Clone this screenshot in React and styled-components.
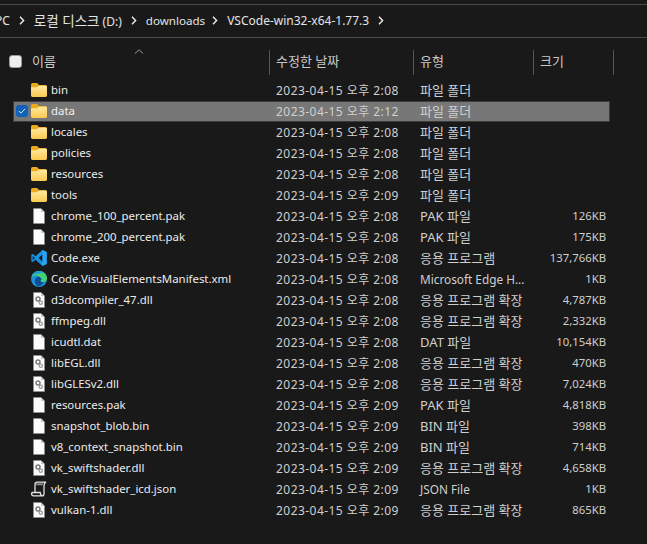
import React from "react";
import styled, { createGlobalStyle } from "styled-components";

const FILES = [
  ["folder", "bin", "2023-04-15 오후 2:08", "파일 폴더", ""],
  ["folder", "data", "2023-04-15 오후 2:12", "파일 폴더", ""],
  ["folder", "locales", "2023-04-15 오후 2:08", "파일 폴더", ""],
  ["folder", "policies", "2023-04-15 오후 2:08", "파일 폴더", ""],
  ["folder", "resources", "2023-04-15 오후 2:08", "파일 폴더", ""],
  ["folder", "tools", "2023-04-15 오후 2:09", "파일 폴더", ""],
  ["file", "chrome_100_percent.pak", "2023-04-15 오후 2:08", "PAK 파일", "126KB"],
  ["file", "chrome_200_percent.pak", "2023-04-15 오후 2:08", "PAK 파일", "175KB"],
  ["vscode", "Code.exe", "2023-04-15 오후 2:08", "응용 프로그램", "137,766KB"],
  ["edge", "Code.VisualElementsManifest.xml", "2023-04-15 오후 2:08", "Microsoft Edge H...", "1KB"],
  ["dll", "d3dcompiler_47.dll", "2023-04-15 오후 2:08", "응용 프로그램 확장", "4,787KB"],
  ["dll", "ffmpeg.dll", "2023-04-15 오후 2:08", "응용 프로그램 확장", "2,332KB"],
  ["file", "icudtl.dat", "2023-04-15 오후 2:08", "DAT 파일", "10,154KB"],
  ["dll", "libEGL.dll", "2023-04-15 오후 2:08", "응용 프로그램 확장", "470KB"],
  ["dll", "libGLESv2.dll", "2023-04-15 오후 2:08", "응용 프로그램 확장", "7,024KB"],
  ["file", "resources.pak", "2023-04-15 오후 2:09", "PAK 파일", "4,818KB"],
  ["file", "snapshot_blob.bin", "2023-04-15 오후 2:09", "BIN 파일", "398KB"],
  ["file", "v8_context_snapshot.bin", "2023-04-15 오후 2:09", "BIN 파일", "714KB"],
  ["dll", "vk_swiftshader.dll", "2023-04-15 오후 2:09", "응용 프로그램 확장", "4,658KB"],
  ["script", "vk_swiftshader_icd.json", "2023-04-15 오후 2:09", "JSON File", "1KB"],
  ["dll", "vulkan-1.dll", "2023-04-15 오후 2:09", "응용 프로그램 확장", "865KB"],
];

const Chevron = () => (
  <svg width="6" height="9" viewBox="0 0 6 9">
    <path d="M1 .8 4.6 4.500 1 8.200" fill="none" stroke="#eee" strokeWidth="1.4" />
  </svg>
);

const FolderIcon = () => (
  <svg width="16" height="14" viewBox="0 0 16 14">
    <defs>
      <linearGradient id="folderFront" x1="0" y1="0" x2="0" y2="1">
        <stop offset="0" stopColor="#ffe9a0" />
        <stop offset="1" stopColor="#fbc94f" />
      </linearGradient>
    </defs>
    <path d="M0 1.500A1.500 1.500 0 0 1 1.500 0H6l2 2h6.500A1.500 1.500 0 0 1 16 3.500V6H0z" fill="#eba91e" />
    <path d="M0 4.200h5.600L8 2.800h6.600A1.400 1.400 0 0 1 16 4.200v8.400a1.400 1.400 0 0 1-1.400 1.400H1.400A1.400 1.400 0 0 1 0 12.600z" fill="url(#folderFront)" />
  </svg>
);

const FileIcon = () => (
  <svg width="12" height="16" viewBox="0 0 12 16">
    <path d="M.5.5H8L11.500 4v11.500H.5z" fill="#fbfbfb" stroke="#8e8e8e" strokeWidth=".6" />
    <path d="M8 .5V4h3.500z" fill="#c8c8c8" />
  </svg>
);

const DllIcon = () => (
  <svg width="12" height="16" viewBox="0 0 12 16">
    <path d="M.5.5H8L11.500 4v11.500H.5z" fill="#fbfbfb" stroke="#8e8e8e" strokeWidth=".6" />
    <path d="M8 .5V4h3.500z" fill="#c8c8c8" />
    <circle cx="5" cy="7" r="2" fill="none" stroke="#7c7c7c" strokeWidth="1.500" />
    <circle cx="7.800" cy="10.800" r="1.600" fill="none" stroke="#9a9a9a" strokeWidth="1.300" />
  </svg>
);

const VsCodeIcon = () => (
  <svg width="16" height="16" viewBox="0 0 100 100">
    <path
      fillRule="evenodd"
      d="M71 0 98 13V87L71 100 29 61 11 75 2 70V30L11 25 29 39ZM72 27 48 50 72 73ZM11 37V63L24 50Z"
      fill="#1a90e0"
    />
    <path fillRule="evenodd" d="M71 0 98 13V87L71 100V73H72V27H71Z" fill="#27a5f2" />
  </svg>
);

const EdgeIcon = () => (
  <svg width="16" height="16" viewBox="0 0 16 16">
    <circle cx="8" cy="8" r="8" fill="#1f8fd6" />
    <path d="M1.200 4C2.800 1.300 5.400 0 8 0c4.500 0 8 3.200 8 7.600 0 2.200-1.800 3.400-3.700 3.400-1.300 0-2.500-.4-3-1 1-.6 1.300-1.500.9-2.400C9.600 6 7.500 4.600 5.400 4.600 3.800 4.600 2.200 5 1.200 6z" fill="#46d06e" />
    <path d="M1.200 4C2.800 1.300 5.400 0 8 0c2 0 4 .8 5.300 2.200C11.500 1.500 9 1.800 7.500 3 5.300 2.500 3 3 1.200 5z" fill="#1b9de2" />
    <path d="M3.800 9.800c0-2.500 1.800-3.900 3.700-3.900 1.200 0 2.300.6 2.700 1.500.4 1-.3 2-1 2.500.7 1 2.300 1.300 3.500 1.100-1 2.600-3.600 4.500-6 4.300-1.900-.9-2.900-3.300-2.900-5.500z" fill="#0a4f96" />
  </svg>
);

const ScriptIcon = () => (
  <svg width="16" height="16" viewBox="0 0 16 16">
    <path
      d="M3 14.800h-.5C1.400 14.800.6 14 .6 12.900c0-.9.500-1.400 1.200-1.400h7.400c0 1.500.5 2.500 1.700 3.300H3zM4 11.500V3.200c0-1.200.8-2 2-2h9c-1.200.6-2 1.700-2 3.200v8.500c0 1.100-1 1.900-2.300 1.900"
      fill="#1b1b1b"
      stroke="#e2e2e2"
      strokeWidth="1.300"
    />
    <path d="M5.200 2.200h7l-.6 2H5.200z" fill="#8a8a8a" />
  </svg>
);

const ICONS = {
  folder: FolderIcon,
  file: FileIcon,
  dll: DllIcon,
  vscode: VsCodeIcon,
  edge: EdgeIcon,
  script: ScriptIcon,
};

const App = () => {
  return (
    <Page>
      <GlobalStyle />
      <AddressBar>
        <Crumb>PC</Crumb>
        <Chevron />
        <Crumb>
          <DriveLabel>로컬 디스크</DriveLabel> (D:)
        </Crumb>
        <Chevron />
        <FolderCrumb>downloads</FolderCrumb>
        <Chevron />
        <Crumb>VSCode-win32-x64-1.77.3</Crumb>
        <Chevron />
      </AddressBar>
      <Header>
        <HeaderCheck />
        <NameHead>
          이름
          <SortArrow width="10" height="5" viewBox="0 0 10 5">
            <path d="M1 4.500 5 .8l4 3.700" fill="none" stroke="#9a9a9a" strokeWidth="1" />
          </SortArrow>
        </NameHead>
        <HeadCell $width={144}>수정한 날짜</HeadCell>
        <HeadCell $width={120}>유형</HeadCell>
        <HeadCell $width={80}>크기</HeadCell>
      </Header>
      <List>
        {FILES.map(([icon, name, date, type, size]) => {
          const Icon = ICONS[icon];
          const selected = name === "data";
          return (
            <Row key={name} $selected={selected}>
              <CheckSlot>
                {selected && (
                  <RowCheck>
                    <svg width="8" height="6" viewBox="0 0 9 7">
                      <path d="M.8 3.600 3.200 6 8.200 1" fill="none" stroke="#fff" strokeWidth="1" />
                    </svg>
                  </RowCheck>
                )}
              </CheckSlot>
              <IconSlot>
                <Icon />
              </IconSlot>
              <Name>{name}</Name>
              <DateCell>{date}</DateCell>
              <TypeCell $hangul={/[가-힣]/.test(type)}>{type}</TypeCell>
              <SizeCell>{size}</SizeCell>
            </Row>
          );
        })}
      </List>
    </Page>
  );
};

const GlobalStyle = createGlobalStyle`
  html, body {
    margin: 0;
    padding: 0;
    background: #191919;
  }
`;

const Page = styled.div`
  width: 647px;
  height: 544px;
  overflow: hidden;
  box-sizing: border-box;
  background: #191919;
  color: #ececec;
  font-family: "Noto Sans", "Noto Sans CJK KR", sans-serif;
  font-size: 12px;
  padding-top: 4px;
`;

const AddressBar = styled.div`
  height: 30px;
  display: flex;
  align-items: center;
  gap: 9px;
  margin-left: -5px;
  padding-bottom: 2px;
  border-top: 1px solid #4a4a4a;
  border-bottom: 1px solid #4a4a4a;
  font-size: 12px;
  color: #e4e4e4;
`;

const Crumb = styled.span`
  white-space: nowrap;
`;

const FolderCrumb = styled(Crumb)`
  font-size: 11.6px;
  margin-right: -2px;
`;

const DriveLabel = styled.span`
  font-size: 13.5px;
`;

const Header = styled.div`
  display: flex;
  height: 25px;
  margin-top: 12px;
  padding-left: 9px;
  font-size: 13px;
  color: #c8c8c8;
`;

const HeaderCheck = styled.div`
  width: 11px;
  height: 11px;
  margin-top: 5px;
  background: #efefef;
  border-radius: 3px;
  border: 1px solid #9a9a9a;
`;

const HeadCell = styled.div`
  position: relative;
  box-sizing: border-box;
  width: ${(p) => p.$width}px;
  border-right: 1px solid #555;
  padding-left: 6px;
  line-height: 23px;
  white-space: nowrap;
`;

const NameHead = styled(HeadCell)`
  width: 239px;
  margin-left: 9px;
  padding-left: 1px;
`;

const SortArrow = styled.svg`
  position: absolute;
  left: 103px;
  top: -1px;
`;

const List = styled.div`
  margin: 5px 0 0 13px;
  width: 597px;
`;

const Row = styled.div`
  box-sizing: border-box;
  height: 21px;
  padding-bottom: 2px;
  display: flex;
  align-items: center;
  white-space: nowrap;
  font-size: 11.4px;
  ${(p) => p.$selected && "background: #777; box-shadow: inset 0 0 0 1px #3c3c3c; color: #f0f0f0;"}
`;

const CheckSlot = styled.div`
  width: 18px;
  flex: none;
  display: flex;
  justify-content: center;
`;

const RowCheck = styled.div`
  width: 12px;
  height: 12px;
  background: #0f62b8;
  border-radius: 3px;
  display: flex;
  align-items: center;
  justify-content: center;
`;

const IconSlot = styled.div`
  width: 16px;
  flex: none;
  display: flex;
  justify-content: center;
  align-items: center;
`;

const Name = styled.div`
  width: 225px;
  flex: none;
  margin-left: 4px;
  color: inherit;
`;

const DateCell = styled.div`
  width: 144px;
  flex: none;
  font-size: 12px;
  letter-spacing: 0.45px;
  color: #cfcfcf;
`;

const TypeCell = styled.div`
  width: 110px;
  flex: none;
  font-size: ${(p) => (p.$hangul ? "13px" : "11.8px")};
  color: #cfcfcf;
`;

const SizeCell = styled.div`
  width: 76px;
  flex: none;
  text-align: right;
  font-size: 11.3px;
  color: #cfcfcf;
`;

export default App;
